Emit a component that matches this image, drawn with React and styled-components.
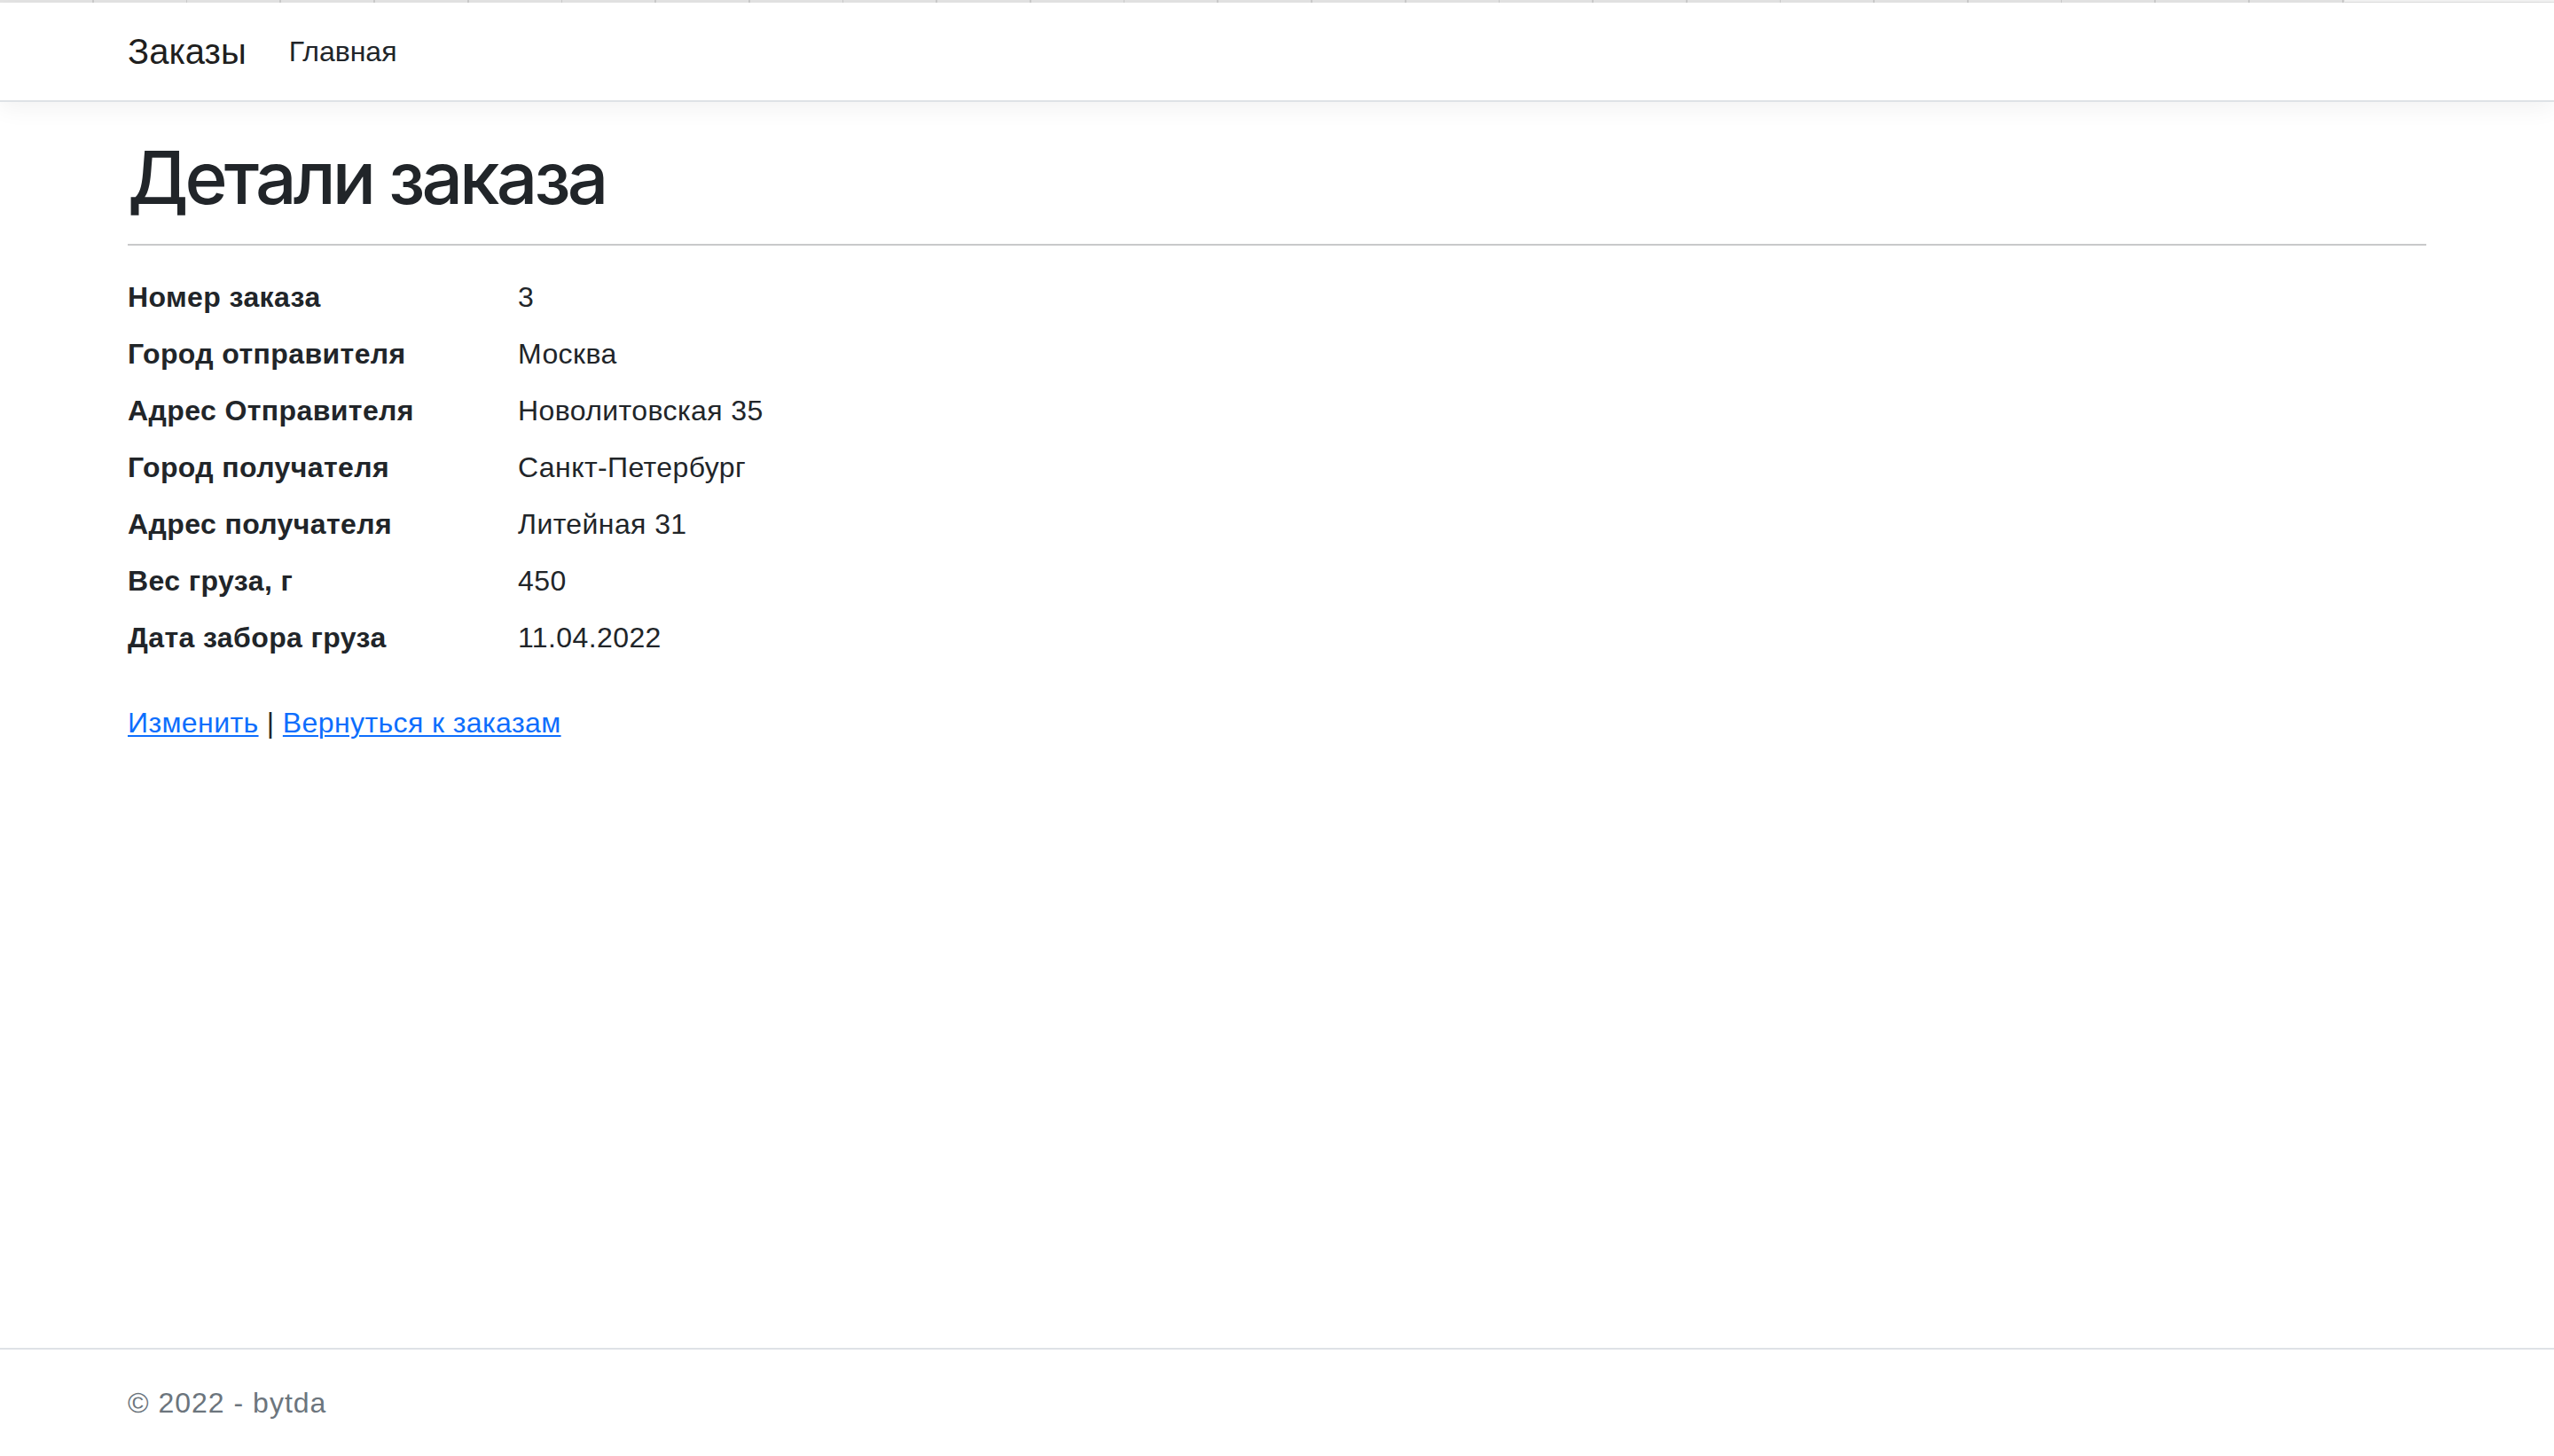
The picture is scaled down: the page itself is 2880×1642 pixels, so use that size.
import React from "react";
import styled, { createGlobalStyle } from "styled-components";

const GlobalStyle = createGlobalStyle`
  html, body {
    margin: 0;
    padding: 0;
    background: #ffffff;
  }
  body {
    font-family: "Liberation Sans", Arial, "Helvetica Neue", sans-serif;
    font-size: 32px;
    line-height: 1.5;
    letter-spacing: 0.4px;
    color: #212529;
  }
  *, *::before, *::after { box-sizing: border-box; }
`;

const Page = styled.div`
  display: flex;
  flex-direction: column;
  min-height: 100vh;
`;

const TabStrip = styled.div`
  display: flex;
  height: 3px;
  flex-shrink: 0;
`;

const TabSegments = styled.div`
  width: 2644px;
  background: repeating-linear-gradient(
    to right,
    #e3e3e3 0,
    #e3e3e3 104px,
    #cbcbcb 104px,
    #cbcbcb 105.7px
  );
`;

const TabRest = styled.div`
  flex: 1;
  background: #f2f2f2;
  border-bottom: 1px solid #dedede;
`;

const Navbar = styled.header`
  background: #ffffff;
  border-bottom: 2px solid #dee2e6;
  box-shadow: 0 8px 24px rgba(0, 0, 0, 0.05);
  margin-bottom: 32px;
`;

const Container = styled.div`
  width: 100%;
  max-width: 2640px;
  margin: 0 auto;
  padding: 0 24px;
`;

const NavInner = styled(Container)`
  display: flex;
  align-items: center;
  height: 110px;
`;

const Brand = styled.a`
  font-size: 40px;
  line-height: 60px;
  letter-spacing: 0;
  color: rgba(0, 0, 0, 0.9);
  text-decoration: none;
  margin-right: 32px;
`;

const NavLink = styled.a`
  font-size: 32px;
  line-height: 48px;
  letter-spacing: 0;
  padding: 16px;
  color: #212529;
  text-decoration: none;
`;

const Main = styled(Container)`
  padding-bottom: 32px;
  flex: 1;
`;

const Title = styled.h1`
  font-family: Inter, "Liberation Sans", Arial, sans-serif;
  font-size: 82px;
  font-weight: 500;
  line-height: 100px;
  letter-spacing: -3.9px;
  margin: 4px 0 0;
  color: #212529;
`;

const Rule = styled.hr`
  margin: 24px 0 34px;
  border: 0;
  height: 2px;
  background: #c8c9ca;
`;

const DetailList = styled.dl`
  display: grid;
  grid-template-columns: 440px 1fr;
  margin: 0 0 32px;
`;

const Term = styled.dt`
  font-weight: 700;
  letter-spacing: 0.4px;
  margin: 0;
`;

const Value = styled.dd`
  margin: 0 0 16px;
`;

const Actions = styled.div`
  color: #212529;
`;

const Link = styled.a`
  color: #0d6efd;
  text-decoration: underline;
  text-underline-offset: 3px;
  text-decoration-thickness: 2px;
`;

const Footer = styled.footer`
  border-top: 2px solid #dee2e6;
  color: #6c757d;
  line-height: 120px;
  letter-spacing: 1px;
  white-space: nowrap;
  flex-shrink: 0;
`;

const details = [
  ["Номер заказа", "3"],
  ["Город отправителя", "Москва"],
  ["Адрес Отправителя", "Новолитовская 35"],
  ["Город получателя", "Санкт-Петербург"],
  ["Адрес получателя", "Литейная 31"],
  ["Вес груза, г", "450"],
  ["Дата забора груза", "11.04.2022"],
];

export default function App() {
  return (
    <>
      <GlobalStyle />
      <Page>
        <TabStrip>
          <TabSegments />
          <TabRest />
        </TabStrip>
        <Navbar>
          <NavInner>
            <Brand href="#">Заказы</Brand>
            <NavLink href="#">Главная</NavLink>
          </NavInner>
        </Navbar>
        <Main>
          <Title>Детали заказа</Title>
          <Rule />
          <DetailList>
            {details.map(([k, v]) => (
              <React.Fragment key={k}>
                <Term>{k}</Term>
                <Value>{v}</Value>
              </React.Fragment>
            ))}
          </DetailList>
          <Actions>
            <Link href="#">Изменить</Link> | <Link href="#">Вернуться к заказам</Link>
          </Actions>
        </Main>
        <Footer>
          <Container>© 2022 - bytda</Container>
        </Footer>
      </Page>
    </>
  );
}
